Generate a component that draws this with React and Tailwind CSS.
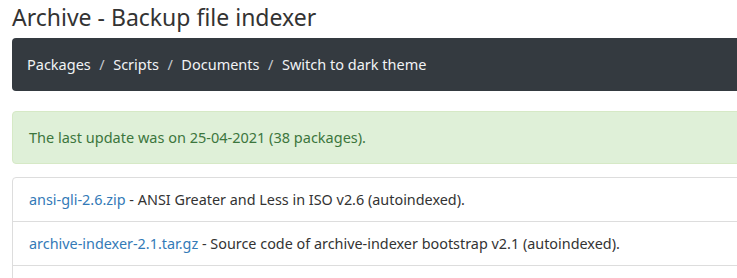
import React from "react";

const crumbs = ["Packages", "Scripts", "Documents", "Switch to dark theme"];

const files = [
  { name: "ansi-gli-2.6.zip", desc: "ANSI Greater and Less in ISO v2.6 (autoindexed)." },
  {
    name: "archive-indexer-2.1.tar.gz",
    desc: "Source code of archive-indexer bootstrap v2.1 (autoindexed).",
  },
];

export default function App() {
  return (
    <div className="w-[737px] h-[278px] overflow-hidden bg-white font-['Noto_Sans',sans-serif] text-[#333]">
      <div className="w-[1140px] pl-[12px]">
        {/* Title */}
        <h3 className="pt-[2px] text-[23px] leading-[30px] text-[#333]">
          Archive - Backup file indexer
        </h3>

        {/* Breadcrumb bar */}
        <nav className="mt-[6px] h-[53px] flex items-center px-[15px] rounded-[4px] bg-[#343a40] text-[14.5px] text-[#f1f3f5]">
          {crumbs.map((c, i) => (
            <span key={c} className="flex items-center">
              {i > 0 && <span className="px-[8.5px] text-[#c5c9ce]">/</span>}
              <a href="#">{c}</a>
            </span>
          ))}
        </nav>

        {/* Alert */}
        <div className="mt-[20px] h-[53px] flex items-center px-[16px] rounded-[4px] border border-[#d6e9c6] bg-[#dff0d8] text-[14.5px] text-[#3c763d]">
          The last update was on 25-04-2021 (38 packages).
        </div>

        {/* File list */}
        <ul className="mt-[13px] rounded-t-[4px] border border-[#dddddd] text-[14.4px]">
          {files.map((f) => (
            <li
              key={f.name}
              className="h-[44px] flex items-center px-[16px] border-b border-[#dddddd]"
            >
              <a href="#" className="text-[#337ab7]">
                {f.name}
              </a>
              <span className="whitespace-pre"> - {f.desc}</span>
            </li>
          ))}
          <li className="h-[44px]" />
        </ul>
      </div>
    </div>
  );
}
